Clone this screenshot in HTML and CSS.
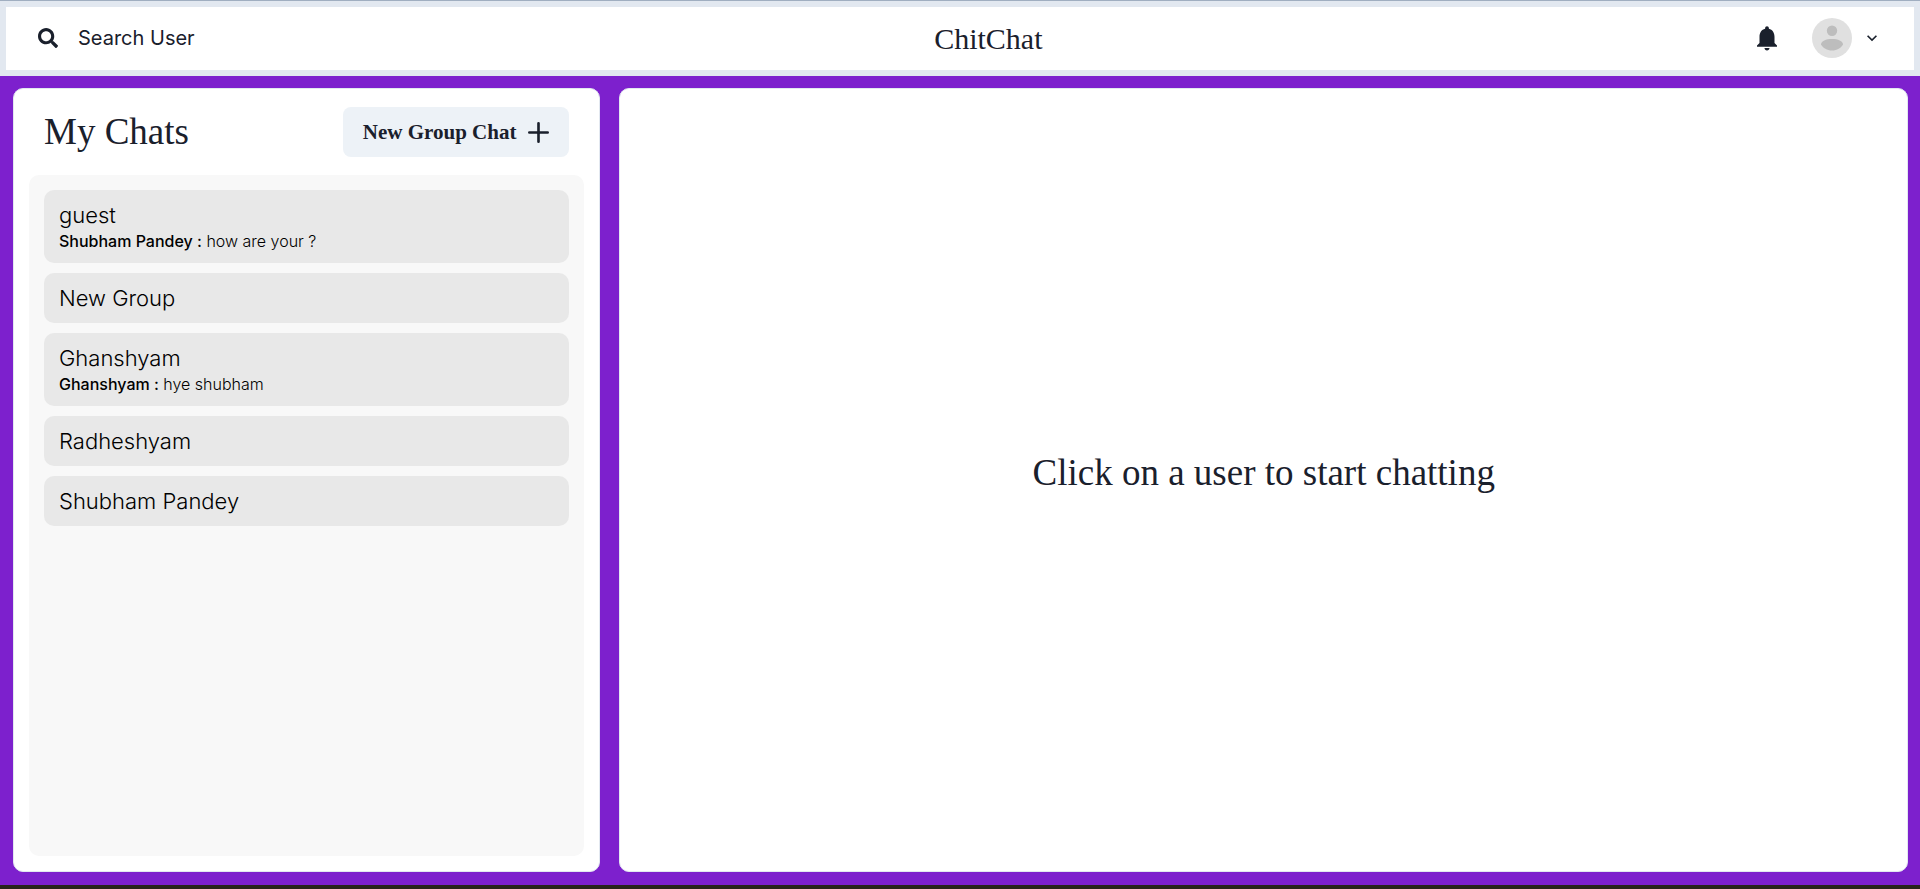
FILE: index.html
```html
<!DOCTYPE html>
<html lang="en">
<head>
<meta charset="utf-8">
<title>ChitChat</title>
<link rel="stylesheet" href="styles.css">
</head>
<body>
<header class="topbar">
  <div class="topbar-side">
    <button type="button" class="search-button">
      <svg class="icon-small" viewBox="0 0 512 512" aria-hidden="true"><path d="M505 442.7L405.3 343c-4.500-4.500-10.600-7-17-7H372c27.600-35.300 44-79.700 44-128C416 93.100 322.900 0 208 0S0 93.100 0 208s93.100 208 208 208c48.300 0 92.700-16.400 128-44v16.300c0 6.400 2.500 12.500 7 17l99.700 99.700c9.400 9.400 24.600 9.400 33.900 0l28.300-28.300c9.400-9.400 9.400-24.600.1-34zM208 336c-70.700 0-128-57.200-128-128 0-70.700 57.200-128 128-128 70.700 0 128 57.200 128 128 0 70.700-57.200 128-128 128z"/></svg>
      <span>Search User</span>
    </button>
  </div>
  <h1 class="brand">ChitChat</h1>
  <div class="topbar-side topbar-end">
    <button type="button" class="bell-button" aria-label="Notifications">
      <svg class="icon-bell" viewBox="0 0 24 24" aria-hidden="true"><path d="M12 22c1.100 0 2-.9 2-2h-4c0 1.100.89 2 2 2zm6-6v-5c0-3.070-1.640-5.640-4.500-6.320V4c0-.83-.67-1.500-1.500-1.500s-1.500.67-1.500 1.500v.68C7.630 5.360 6 7.920 6 11v5l-2 2v1h16v-1l-2-2z"/></svg>
    </button>
    <button type="button" class="profile-button" aria-label="Profile menu">
      <svg class="avatar" viewBox="0 0 40 40" aria-hidden="true">
        <circle cx="20" cy="20" r="20" fill="#e0e0e0"/>
        <circle cx="20" cy="12.700" r="5.200" fill="#bdbdbd"/>
        <path d="M9 26.500C9 23 14 21 20 21s11 2 11 5.500C29 30 25 32.500 20 32.500S11 30 9 26.500z" fill="#bdbdbd"/>
      </svg>
      <svg class="icon-small" viewBox="0 0 24 24" aria-hidden="true"><path d="M16.590 8.590L12 13.170 7.410 8.590 6 10l6 6 6-6z"/></svg>
    </button>
  </div>
</header>
<main class="workspace">
  <section class="panel chats">
    <div class="chats-head">
      <h2 class="title">My Chats</h2>
      <button type="button" class="group-button">
        <span>New Group Chat</span>
        <svg class="icon-plus" viewBox="0 0 24 24" aria-hidden="true"><path d="M0,12a1.500,1.500,0,0,0,1.500,1.500h8.750a.25.25,0,0,1,.25.25V22.500a1.500,1.500,0,0,0,3,0V13.750a.25.25,0,0,1,.25-.25H22.500a1.500,1.500,0,0,0,0-3H13.750a.25.25,0,0,1-.25-.25V1.500a1.500,1.500,0,0,0-3,0v8.750a.25.25,0,0,1-.25.25H1.500A1.500,1.500,0,0,0,0,12Z"/></svg>
      </button>
    </div>
    <div class="chat-list">
      <button type="button" class="chat"><span class="name">guest</span><span class="message"><b>Shubham Pandey :</b> how are your ?</span></button>
      <button type="button" class="chat"><span class="name">New Group</span></button>
      <button type="button" class="chat"><span class="name">Ghanshyam</span><span class="message"><b>Ghanshyam :</b> hye shubham</span></button>
      <button type="button" class="chat"><span class="name">Radheshyam</span></button>
      <button type="button" class="chat"><span class="name">Shubham Pandey</span></button>
    </div>
  </section>
  <section class="panel conversation">
    <p class="title">Click on a user to start chatting</p>
  </section>
</main>
</body>
</html>
```
FILE: styles.css
```css
* {
  box-sizing: border-box;
}

body {
  margin: 0;
  min-height: 100vh;
  display: flex;
  flex-direction: column;
  border-top: 1px solid #a0aec0;
  border-bottom: 4px solid #28241a;
  background: #7d20cd;
  color: #1a202c;
  font-family: Inter, "Open Sans", sans-serif;
  font-size: 20px;
}

h1,
h2,
p {
  margin: 0;
  font-weight: 400;
}

button {
  border: 0;
  padding: 0;
  background: none;
  color: inherit;
  font: inherit;
  cursor: pointer;
}

svg {
  display: block;
  flex: none;
  fill: currentColor;
}

.icon-small {
  width: 20px;
  height: 20px;
}

.icon-plus {
  width: 21px;
  height: 21px;
}

.icon-bell {
  width: 30px;
  height: 30px;
}

.avatar {
  width: 40px;
  height: 40px;
}

.topbar {
  display: flex;
  align-items: center;
  justify-content: space-between;
  min-height: 75px;
  padding: 0 32px;
  border: 6px solid #e2e8f0;
  background: #fff;
}

.topbar-side {
  display: flex;
  align-items: center;
  padding-bottom: 2px;
}

.topbar-end {
  gap: 30px;
}

.search-button {
  display: flex;
  align-items: center;
  gap: 20px;
  padding-right: 30px;
}

.brand {
  font-family: "Liberation Serif", serif;
  font-size: 30px;
}

.profile-button {
  display: flex;
  align-items: center;
  gap: 10px;
}

.workspace {
  flex: 1;
  display: flex;
  justify-content: space-between;
  padding: 12px 12px 13px 13px;
}

.panel {
  border: 1px solid #e2e8f0;
  border-radius: 10px;
  background: #fff;
}

.chats {
  display: flex;
  flex-direction: column;
  width: 31%;
  padding: 15px;
}

.conversation {
  display: flex;
  align-items: center;
  justify-content: center;
  width: 68%;
  padding-bottom: 15px;
}

.title {
  font-family: "Liberation Serif", serif;
  font-size: 37px;
  line-height: 56px;
}

.chats-head {
  display: flex;
  align-items: center;
  justify-content: space-between;
  padding: 0 15px 15px;
}

.group-button {
  display: flex;
  align-items: center;
  gap: 12px;
  height: 50px;
  padding: 0 20px;
  border-radius: 8px;
  background: #edf2f7;
  font-family: "Liberation Serif", serif;
  font-size: 21px;
  font-weight: 700;
}

.chat-list {
  flex: 1;
  display: flex;
  flex-direction: column;
  gap: 10px;
  padding: 15px;
  border-radius: 10px;
  background: #f8f8f8;
}

.chat {
  display: flex;
  flex-direction: column;
  padding: 10px 15px;
  border-radius: 10px;
  background: #e8e8e8;
  color: #000;
  font-weight: 300;
  text-align: left;
}

.name {
  font-size: 22px;
  line-height: 30px;
}

.message {
  font-size: 16px;
  line-height: 23px;
}

.message b {
  font-weight: 500;
}
```
